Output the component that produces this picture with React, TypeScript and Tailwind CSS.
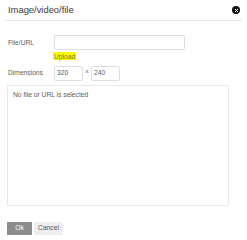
import React from "react";

export default function App() {
  return (
    <div
      className="relative h-[240px] w-[247px] overflow-hidden bg-white text-[#5c5c5c]"
      style={{ fontFamily: '"Liberation Sans", Arial, sans-serif' }}
    >
      <div className="mx-[5px] flex h-[21px] items-center justify-between border-b border-[#e3e8ee] pl-[3px] pr-[2px]">
        <span className="text-[9.4px] leading-none text-[#3a3a3a]">Image/video/file</span>
        <span className="flex h-[8px] w-[8px] items-center justify-center rounded-full bg-[#111]">
          <svg viewBox="0 0 8 8" className="h-[5px] w-[5px]">
            <path d="M2 2 L6 6 M6 2 L2 6" stroke="#fff" strokeWidth="1.6" strokeLinecap="round" />
          </svg>
        </span>
      </div>

      <div className="mt-[14px] flex items-start pl-[8px]">
        <span className="w-[46px] pt-[5px] text-[6.7px] leading-none">File/URL</span>
        <div className="flex flex-col items-start">
          <div className="h-[15px] w-[131px] rounded-[2px] border border-[#dedede] bg-white" />
          <span className="mt-[2px] -ml-[1px] bg-[#ffff00] px-[1px] py-[0.5px] text-[6.7px] leading-[7px] text-[#6f6f30]">
            Upload
          </span>
        </div>
      </div>

      <div className="mt-[6px] flex items-center pl-[8px]">
        <span className="w-[46px] text-[6.7px] leading-none">Dimensions</span>
        <div className="flex h-[15px] w-[29px] items-center rounded-[2px] border border-[#dedede] pl-[2px] text-[6.7px]">
          320
        </div>
        <span className="mb-[6px] w-[8px] text-center text-[6px] leading-none">x</span>
        <div className="flex h-[15px] w-[29px] items-center rounded-[2px] border border-[#dedede] pl-[2px] text-[6.7px]">
          240
        </div>
      </div>

      <div className="mt-[4px] ml-[7px] h-[121px] w-[222px] border border-[#e9e9e4] px-[5px] pt-[6px] text-[6.7px] leading-none">
        No file or URL is selected
      </div>

      <div className="mt-[16px] ml-[7px] flex gap-[2px]">
        <button className="flex h-[13px] w-[25px] items-center justify-center bg-[#8c8c8c] text-[6.7px] text-white">
          Ok
        </button>
        <button className="flex h-[13px] w-[29px] items-center justify-center bg-[#efefef] text-[6.7px] text-[#555]">
          Cancel
        </button>
      </div>
    </div>
  );
}
